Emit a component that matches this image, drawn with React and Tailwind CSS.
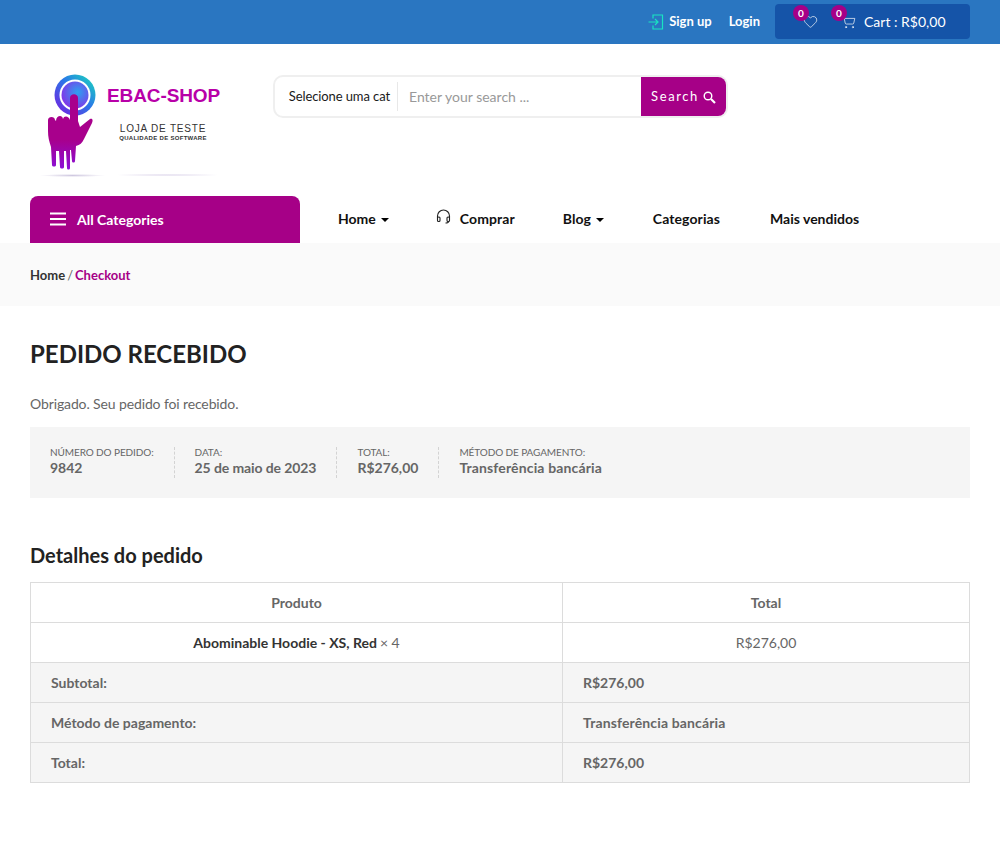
import React from "react";
import { ShoppingCart, Heart } from "lucide-react";

const Caret = () => (
  <span className="inline-block ml-[5px] align-middle border-x-[4px] border-x-transparent border-t-[4px] border-t-black" />
);

const Badge = ({ children }) => (
  <span className="absolute left-[-10px] top-[-9px] flex h-[16px] w-[16px] items-center justify-center rounded-full bg-[#a60087] text-[10px] font-bold leading-none text-white">
    {children}
  </span>
);

const LoginIcon = () => (
  <svg width="16" height="16" viewBox="0 0 16 16" fill="none" stroke="#19e3c2" strokeWidth="1.2" className="mr-[5px]">
    <path d="M5 4.5 V1 H14.5 V15 H5 V11.5" />
    <path d="M0.5 8 H10 M7 5 L10 8 L7 11" />
  </svg>
);

const SearchIcon = () => (
  <svg width="13" height="13" viewBox="0 0 13 13" fill="none" stroke="#fff" className="mt-[2px]">
    <circle cx="5" cy="5" r="3.8" strokeWidth="1.4" />
    <path d="M8 8 L12 12" strokeWidth="2.2" />
  </svg>
);

const MenuIcon = () => (
  <svg width="16" height="14" viewBox="0 0 16 14" fill="none" stroke="#fff" strokeWidth="2" className="mr-[11px]">
    <path d="M0 1.5 H16 M0 7 H16 M0 12.5 H16" />
  </svg>
);

const HeadsetIcon = () => (
  <svg width="15" height="15" viewBox="0 0 15 15" fill="none" stroke="#222" strokeWidth="1.1" className="mb-[3px] mr-[9px]">
    <path d="M1.5 9 V7 a6 6 0 0 1 12 0 V9" />
    <rect x="1.5" y="8" width="2.5" height="4.5" rx="1" />
    <rect x="11" y="8" width="2.5" height="4.5" rx="1" />
    <path d="M12.5 12.5 q0 1.5 -3 1.5" />
  </svg>
);

const LogoMark = () => (
  <svg width="62" height="110" viewBox="0 0 62 110" className="shrink-0">
    <defs>
      <linearGradient id="ring" x1="0" y1="1" x2="1" y2="0">
        <stop offset="0" stopColor="#7a18e0" />
        <stop offset="0.55" stopColor="#2a78e8" />
        <stop offset="1" stopColor="#18e0b8" />
      </linearGradient>
      <radialGradient id="core" cx="0.6" cy="0.4" r="0.7">
        <stop offset="0" stopColor="#2ea0f0" />
        <stop offset="1" stopColor="#8a2ae8" />
      </radialGradient>
      <linearGradient id="hand" x1="0" y1="0" x2="0" y2="1">
        <stop offset="0" stopColor="#a8008c" />
        <stop offset="0.6" stopColor="#a8008c" />
        <stop offset="1" stopColor="#8a10d8" />
      </linearGradient>
    </defs>
    <circle cx="32" cy="24" r="20.5" fill="url(#ring)" />
    <circle cx="32" cy="24" r="15.5" fill="#fff" />
    <circle cx="32" cy="24" r="13.5" fill="url(#core)" />
    <path
      d="M27 27 C27 22 35 22 35 27 L35 50 L37 56 L47 48 C50 47 50 50 49 52 L41 68 C39 72 37 74 33 75 L32 90 C32 92 29 92 29 90 L28 79 L27 79 L27 97 C27 99 24 99 24 97 L23 80 L21 80 L21 96 C21 98 17 98 17 96 L16 80 L13 80 L13 94 C13 96 9 96 9 94 L8 76 C6 70 5 66 5 60 L5 49 C5 45 12 45 12 49 L13 50 C13 45 19 43 20 48 C21 44 26 45 27 49 Z"
      fill="url(#hand)"
    />
  </svg>
);

const Logo = () => (
  <div className="relative h-[110px] w-[200px]">
    <div className="flex">
      <div className="ml-[13px]">
        <LogoMark />
      </div>
      <div className="ml-[2px] mt-[12px] flex w-[112px] flex-col items-center whitespace-nowrap font-['Liberation_Sans',sans-serif]">
        <div className="w-full text-[19px] font-bold leading-[26px] tracking-[-0.1px] text-[#b800a8]">EBAC-SHOP</div>
        <div className="mt-[14px] text-[10px] leading-[12px] tracking-[0.8px] text-[#333]">LOJA DE TESTE</div>
        <div className="text-[6px] font-bold leading-[7px] tracking-[0.3px] text-[#333]">QUALIDADE DE SOFTWARE</div>
      </div>
    </div>
    <div className="absolute left-[10px] top-[103px] h-[3px] w-[65px] rounded-full bg-[radial-gradient(closest-side,#cfc8e0,#ffffff)]" />
    <div className="absolute left-[80px] top-[103px] h-[2px] w-[115px] rounded-full bg-[radial-gradient(closest-side,#d8d0e8,#ffffff)]" />
  </div>
);

const rows = [
  ["Subtotal:", "R$276,00", ""],
  ["Método de pagamento:", "Transferência bancária", "tracking-[0.14px]"],
  ["Total:", "R$276,00", ""],
];

const meta = [
  ["NÚMERO DO PEDIDO:", "9842", ""],
  ["DATA:", "25 de maio de 2023", "tracking-[-0.1px]"],
  ["TOTAL:", "R$276,00", ""],
  ["MÉTODO DE PAGAMENTO:", "Transferência bancária", "tracking-[0.14px]"],
];

export default function App() {
  return (
    <div className="min-h-[861px] bg-white font-['Lato',sans-serif] text-[14px] text-[#666]">
      {/* top bar */}
      <div className="flex h-[44px] items-start justify-end bg-[#2a76c1] pr-[30px]">
        <div className="flex h-[44px] items-center text-[13px] font-bold text-white">
          <LoginIcon />
          <span>Sign up</span>
          <span className="ml-[17px]">Login</span>
        </div>
        <div className="ml-[15px] mt-[4px] flex h-[35px] w-[195px] items-center rounded-[4px] bg-[#1554a8] pl-[28px] text-[14px] text-white">
          <span className="relative">
            <Heart size={15} strokeWidth={1.1} />
            <Badge>0</Badge>
          </span>
          <span className="relative ml-[23px]">
            <ShoppingCart size={15} strokeWidth={1.1} />
            <Badge>0</Badge>
          </span>
          <span className="ml-[8px]">Cart : R$0,00</span>
        </div>
      </div>

      {/* logo + search */}
      <div className="flex h-[152px] items-start px-[30px]">
        <div className="mt-[27px] w-[243px]">
          <Logo />
        </div>
        <div className="mt-[31px] flex h-[43px] w-[455px] items-stretch overflow-hidden rounded-[10px] border-2 border-[#efefef] bg-white">
          <div className="my-[5px] flex w-[123px] items-center justify-end border-r border-[#e8e8e8] pr-[7px] text-[13px] tracking-[-0.1px] text-[#1a1a1a]">
            Selecione uma cat
          </div>
          <div className="flex flex-1 items-center pl-[11px] text-[14px] text-[#999]">
            Enter your search ...
          </div>
          <div className="flex w-[85px] items-center justify-center gap-[4px] bg-[#a60087] text-[13px] tracking-[1.6px] text-white">
            Search
            <SearchIcon />
          </div>
        </div>
      </div>

      {/* nav */}
      <div className="flex h-[47px] items-stretch px-[30px]">
        <div className="flex w-[270px] items-center rounded-t-[8px] bg-[#a60087] pb-[1px] pl-[20px] text-[14px] font-bold text-white">
          <MenuIcon />
          All Categories
        </div>
        <div className="flex items-center pb-[3px] pl-[38px] text-[14px] font-bold text-[#111]">
          <span>
            Home
            <Caret />
          </span>
          <span className="ml-[47px] flex items-center tracking-[0.1px]">
            <HeadsetIcon />
            Comprar
          </span>
          <span className="ml-[48px]">
            Blog
            <Caret />
          </span>
          <span className="ml-[49px] tracking-[0.1px]">Categorias</span>
          <span className="ml-[50px]">Mais vendidos</span>
        </div>
      </div>

      {/* breadcrumb */}
      <div className="flex h-[63px] items-center bg-[#fafafa] px-[30px] pt-[3px] text-[13px] font-bold text-[#333]">
        Home
        <span className="mx-[2px] font-normal text-[#666]">/</span>
        <span className="text-[#a60087]">Checkout</span>
      </div>

      <div className="px-[30px]">
        <h1 className="mt-[32px] text-[24px] font-bold leading-[32px] text-[#222]">PEDIDO RECEBIDO</h1>
        <p className="mt-[24px] text-[14px] leading-[20px] tracking-[-0.12px]">Obrigado. Seu pedido foi recebido.</p>

        <div className="mt-[13px] flex h-[71px] items-start bg-[#f5f5f5] px-[20px] pt-[20px]">
          {meta.map(([label, value, spacing], i) => (
            <div
              key={label}
              className={
                i < 3
                  ? "mr-[20px] h-[31px] border-r border-dashed border-[#d3d3d3] pr-[20px]"
                  : "h-[31px]"
              }
            >
              <div className="text-[10px] leading-[11px] tracking-[-0.1px] text-[#666]">{label}</div>
              <div className={`text-[14px] font-bold leading-[19px] text-[#666] ${spacing}`}>{value}</div>
            </div>
          ))}
        </div>

        <h2 className="mt-[44px] text-[20px] font-bold leading-[26px] text-[#222]">Detalhes do pedido</h2>

        <div className="mt-[14px] border-l border-t border-[#dcdcdc]">
          <div className="flex h-[40px] font-bold">
            <div className="flex w-[532px] items-center justify-center border-b border-r border-[#dcdcdc]">Produto</div>
            <div className="flex flex-1 items-center justify-center border-b border-r border-[#dcdcdc]">Total</div>
          </div>
          <div className="flex h-[40px]">
            <div className="flex w-[532px] items-center justify-center border-b border-r border-[#dcdcdc]">
              <span className="font-bold text-[#333]">Abominable Hoodie - XS, Red</span>
              <span className="ml-[3px]">× 4</span>
            </div>
            <div className="flex flex-1 items-center justify-center border-b border-r border-[#dcdcdc]">R$276,00</div>
          </div>
          {rows.map(([label, value, spacing]) => (
            <div key={label} className="flex h-[40px] bg-[#f5f5f5] font-bold">
              <div className="flex w-[532px] items-center border-b border-r border-[#dcdcdc] pl-[20px]">{label}</div>
              <div className={`flex flex-1 items-center border-b border-r border-[#dcdcdc] pl-[20px] ${spacing}`}>{value}</div>
            </div>
          ))}
        </div>
      </div>
    </div>
  );
}
